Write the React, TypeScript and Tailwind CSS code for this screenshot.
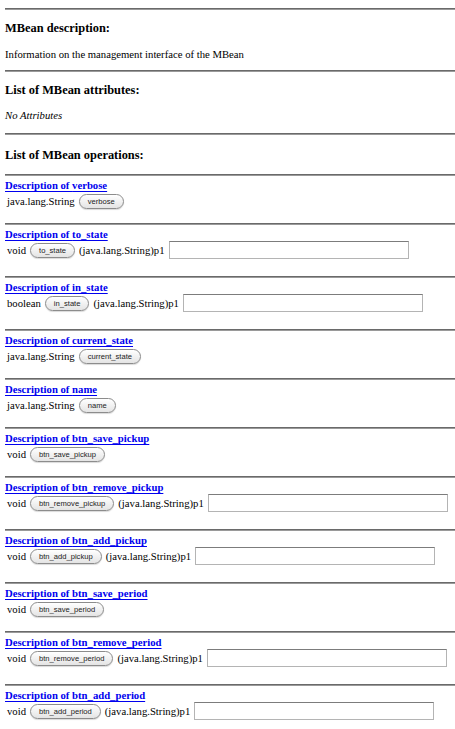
import React from "react";

interface Operation {
  name: string;
  returns: string;
  param?: boolean;
}

const operations: Operation[] = [
  { name: "verbose", returns: "java.lang.String" },
  { name: "to_state", returns: "void", param: true },
  { name: "in_state", returns: "boolean", param: true },
  { name: "current_state", returns: "java.lang.String" },
  { name: "name", returns: "java.lang.String" },
  { name: "btn_save_pickup", returns: "void" },
  { name: "btn_remove_pickup", returns: "void", param: true },
  { name: "btn_add_pickup", returns: "void", param: true },
  { name: "btn_save_period", returns: "void" },
  { name: "btn_remove_period", returns: "void", param: true },
  { name: "btn_add_period", returns: "void", param: true },
];

const Rule = ({ className = "" }: { className?: string }) => (
  <div
    className={`h-[2px] border-t border-t-[#6a6a6a] border-b border-b-[#9a9a9a] ${className}`}
  />
);

const Heading = ({ children, className = "" }: { children: React.ReactNode; className?: string }) => (
  <h3 className={`h-[14px] text-[12.4px] leading-[14px] font-bold ${className}`}>{children}</h3>
);

const OpButton = ({ label }: { label: string }) => (
  <button
    type="button"
    className="h-[15px] px-[8px] rounded-full border border-[#8c8c8c] bg-gradient-to-b from-white to-[#e4e4e4] text-[7.6px] leading-[13px] text-[#222] shadow-[0_1px_1px_rgba(0,0,0,0.15)] font-['Liberation_Sans',Arial,sans-serif]"
  >
    {label}
  </button>
);

const OperationRow = ({ op }: { op: Operation }) => (
  <div>
    <div className="mt-[3px] h-[12px] leading-[12px]">
      <a href="#" className="font-bold text-[#0000ee] underline underline-offset-[2px]">
        Description of {op.name}
      </a>
    </div>
    <div
      className={`mt-[2px] h-[16px] flex items-center gap-[4px] pl-[2px] ${op.param ? "mb-[18px]" : "mb-[14px]"}`}
    >
      <span>{op.returns}</span>
      <OpButton label={op.name} />
      {op.param && (
        <>
          <span>(java.lang.String)p1</span>
          <input
            type="text"
            className="h-[18px] w-[240px] shrink-0 bg-white border border-[#b4b4b4] border-t-[#7c7c7c] outline-none"
          />
        </>
      )}
    </div>
    <Rule />
  </div>
);

export default function App() {
  return (
    <div className="min-h-[729px] bg-white pl-[5px] text-black text-[10.7px] font-['Liberation_Serif','Times_New_Roman',serif]">
      <Rule className="mt-[8px]" />
      <Heading className="mt-[11px]">MBean description:</Heading>
      <p className="mt-[13px] h-[12px] leading-[12px]">
        Information on the management interface of the MBean
      </p>
      <Rule className="mt-[10px]" />
      <Heading className="mt-[11px]">List of MBean attributes:</Heading>
      <p className="mt-[12px] h-[12px] leading-[12px] italic">No Attributes</p>
      <Rule className="mt-[12px]" />
      <Heading className="mt-[13px]">List of MBean operations:</Heading>
      <Rule className="mt-[12px]" />
      {operations.map((op) => (
        <OperationRow key={op.name} op={op} />
      ))}
    </div>
  );
}
